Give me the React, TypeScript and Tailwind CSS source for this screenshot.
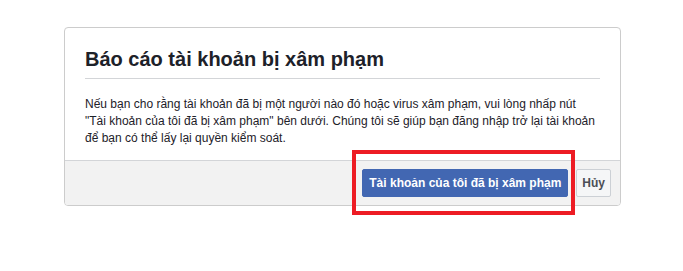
export default function App() {
  return (
    <div className="relative w-[683px] h-[271px] bg-white font-['Liberation_Sans',Arial,sans-serif] text-[#1d2129]">
      <div className="absolute left-[64px] top-[27px] w-[557px] border border-[#cccccc] rounded-[4px] overflow-hidden">
        <div className="px-[20px]">
          <div className="pt-[19px] pb-[7px] border-b border-[#d3d5d8]">
            <h2 className="text-[20px] leading-[24px] font-bold">Báo cáo tài khoản bị xâm phạm</h2>
          </div>
          <p className="pt-[17px] pb-[13px] text-[12px] leading-[17px]">
            Nếu bạn cho rằng tài khoản đã bị một người nào đó hoặc virus xâm phạm, vui lòng nhấp nút
            "Tài khoản của tôi đã bị xâm phạm" bên dưới. Chúng tôi sẽ giúp bạn đăng nhập trở lại tài khoản
            để bạn có thể lấy lại quyền kiểm soát.
          </p>
        </div>
        <div className="flex justify-end items-center gap-[8px] border-t border-[#d3d5d8] bg-[#f2f2f2] py-[8px] pr-[9px]">
          <button className="h-[28px] px-[6px] rounded-[2px] border border-[#4267b2] bg-[#4267b2] text-white text-[12px] font-bold">
            Tài khoản của tôi đã bị xâm phạm
          </button>
          <button className="h-[28px] px-[5px] rounded-[2px] border border-[#ccd0d5] bg-[#f5f6f7] text-[#4b4f56] text-[12px] font-bold">
            Hủy
          </button>
        </div>
      </div>
      <div className="absolute left-[352px] top-[150px] w-[223px] h-[65px] border-[4px] border-[#ed1c24]" />
    </div>
  );
}
